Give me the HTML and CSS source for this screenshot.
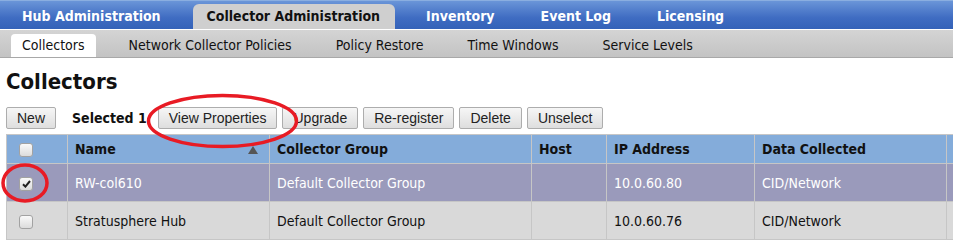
FILE: index.html
```html
<!DOCTYPE html>
<html lang="en">
<head>
    <meta charset="UTF-8">
    <title>Collectors</title>
    <link rel="stylesheet" href="styles.css">
</head>
<body>
    <div class="topnav">
        <a class="tab" href="#">Hub Administration</a>
        <a class="tab active" href="#">Collector Administration</a>
        <a class="tab" href="#">Inventory</a>
        <a class="tab" href="#">Event Log</a>
        <a class="tab" href="#">Licensing</a>
    </div>
    <div class="subnav">
        <a class="sub active" href="#">Collectors</a>
        <a class="sub" href="#">Network Collector Policies</a>
        <a class="sub" href="#">Policy Restore</a>
        <a class="sub" href="#">Time Windows</a>
        <a class="sub" href="#">Service Levels</a>
    </div>
    <div class="content">
        <h1>Collectors</h1>
        <div class="toolbar">
            <button class="btn">New</button>
            <span class="selected">Selected 1</span>
            <button class="btn">View Properties</button>
            <button class="btn">Upgrade</button>
            <button class="btn">Re-register</button>
            <button class="btn">Delete</button>
            <button class="btn">Unselect</button>
        </div>
    </div>
    <table class="grid">
        <colgroup>
            <col style="width: 61px">
            <col style="width: 202px">
            <col style="width: 262px">
            <col style="width: 75px">
            <col style="width: 148px">
            <col style="width: 192px">
            <col style="width: 60px">
        </colgroup>
        <thead>
            <tr>
                <th><span class="check"></span></th>
                <th class="sorted">Name <span class="arrow"></span></th>
                <th>Collector Group</th>
                <th>Host</th>
                <th>IP Address</th>
                <th>Data Collected</th>
                <th></th>
            </tr>
        </thead>
        <tbody>
            <tr class="picked">
                <td><span class="check on"><svg width="9" height="8" viewBox="0 0 9 8"><path d="M1 4.2 L3.4 6.6 L8 1" fill="none" stroke="#222" stroke-width="2"/></svg></span></td>
                <td>RW-col610</td>
                <td>Default Collector Group</td>
                <td></td>
                <td>10.0.60.80</td>
                <td>CID/Network</td>
                <td></td>
            </tr>
            <tr>
                <td><span class="check"></span></td>
                <td>Stratusphere Hub</td>
                <td>Default Collector Group</td>
                <td></td>
                <td>10.0.60.76</td>
                <td>CID/Network</td>
                <td></td>
            </tr>
        </tbody>
    </table>
    <svg class="marks" width="953" height="250" viewBox="0 0 953 250">
        <ellipse cx="222.5" cy="121" rx="74" ry="25.5" fill="none" stroke="#e81b24" stroke-width="3.5"/>
        <ellipse cx="25" cy="183" rx="22" ry="18" fill="none" stroke="#e81b24" stroke-width="3.5"/>
    </svg>
</body>
</html>
```

FILE: styles.css
```css
body {
    margin: 0;
    padding: 0;
    font-family: "DejaVu Sans Condensed", "DejaVu Sans", sans-serif;
    font-size: 14px;
    color: #111;
    background: #fff;
    position: relative;
    overflow: hidden;
    width: 953px;
    height: 250px;
}
a {
    text-decoration: none;
}
.topnav {
    height: 29px;
    display: flex;
    align-items: flex-end;
    padding-left: 8px;
    background: linear-gradient(#6a95d8, #3f6cc2 60%, #3462b8);
    border-top: 1px solid #8aaee0;
    box-sizing: border-box;
}
.tab {
    height: 25px;
    line-height: 25px;
    padding: 0 15px 0 14px;
    margin-right: 17px;
    color: #fff;
    font-weight: bold;
    font-size: 14px;
}
.tab.active {
    background: #cfcfcf;
    color: #111;
    border-radius: 6px 6px 0 0;
}
.subnav {
    height: 29px;
    display: flex;
    align-items: flex-end;
    padding-left: 11px;
    background: linear-gradient(#d4d4d4, #c3c3c3);
    border-top: 1px solid #fff;
    border-bottom: 1px solid #a8a8a8;
    box-sizing: border-box;
}
.sub {
    height: 23px;
    line-height: 22px;
    padding: 0 11px;
    margin-right: 22px;
    color: #111;
    font-size: 14px;
}
.sub.active {
    background: #fff;
    border-radius: 4px 4px 0 0;
}
.content {
    padding: 0 6px;
}
h1 {
    margin: 11px 0 12px;
    font-size: 22px;
    line-height: 26px;
    font-weight: bold;
    color: #111;
}
.toolbar {
    display: flex;
    align-items: center;
    gap: 5px;
}
.btn {
    height: 22px;
    padding: 0 10px;
    font-family: "Liberation Sans", Arial, sans-serif;
    font-size: 14px;
    color: #222;
    background: linear-gradient(#f6f6f6, #dedede);
    border: 1px solid #adadad;
    border-radius: 2px;
}
.selected {
    font-weight: bold;
    font-size: 14px;
    margin: 0 6px 0 11px;
}
.grid {
    margin: 5px 0 0 6px;
    border-collapse: collapse;
    table-layout: fixed;
    width: 1000px;
}
.grid th, .grid td {
    border: 1px solid #c6c6c6;
    text-align: left;
    padding: 0 0 0 7px;
    white-space: nowrap;
    overflow: hidden;
}
.grid th {
    height: 28px;
    background: #84acda;
    font-weight: bold;
    font-size: 14px;
}
.grid td {
    height: 37px;
    background: #d9d9d9;
    font-size: 14px;
}
.grid th:first-child, .grid td:first-child {
    padding-left: 12px;
}
.grid tr.picked td {
    background: #9a9abb;
    color: #fff;
}
.sorted {
    position: relative;
}
.arrow {
    position: absolute;
    right: 11px;
    top: 11px;
    width: 0;
    height: 0;
    border-left: 5px solid transparent;
    border-right: 5px solid transparent;
    border-bottom: 8px solid #555;
}
.check {
    display: inline-flex;
    align-items: center;
    justify-content: center;
    width: 12px;
    height: 12px;
    border: 1px solid #a2a2a2;
    border-radius: 3px;
    background: linear-gradient(#fafafa, #dcdcdc);
    vertical-align: middle;
}
.marks {
    position: absolute;
    left: 0;
    top: 0;
    pointer-events: none;
}
```
